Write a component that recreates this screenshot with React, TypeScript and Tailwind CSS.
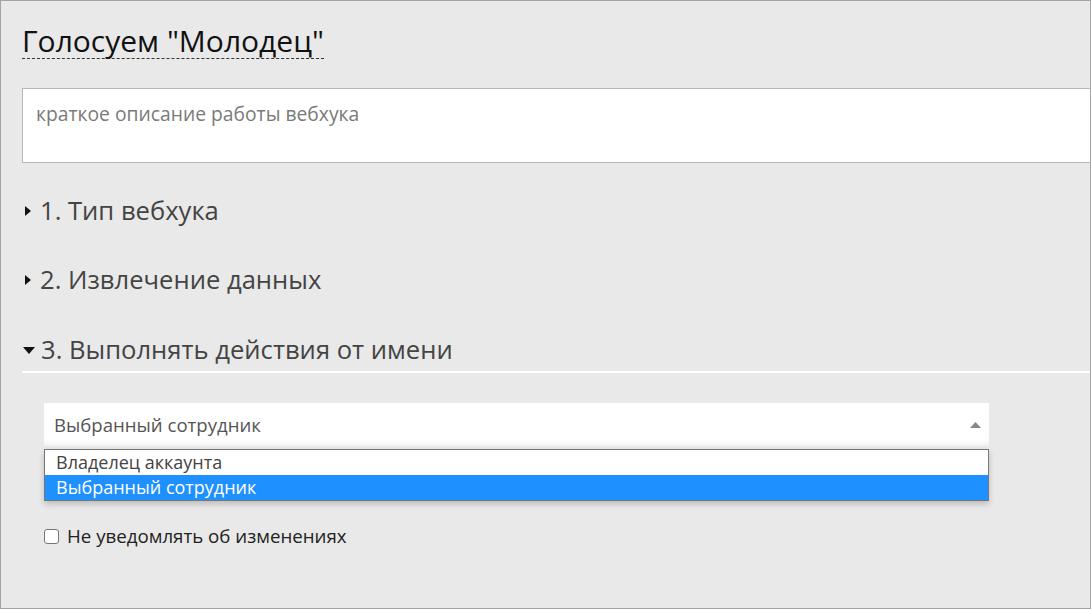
import React from "react";

export default function App() {
  return (
    <div
      className="w-[1091px] h-[609px] border border-[#a3a3a3] bg-[#e9e9e9] overflow-hidden relative"
      style={{ fontFamily: '"Open Sans", "Noto Sans", sans-serif' }}
    >
      <div className="pl-[21px] pt-[22px]">
        <div className="h-[40px] flex items-start">
          <span className="text-[30px] leading-[35px] text-[#111] border-b border-dashed border-[#333]">
            Голосуем "Молодец"
          </span>
        </div>
        <div className="mt-[25px] h-[75px] bg-white border border-[#b8b8b8] border-r-0 pl-[13px] pt-[11px] text-[19.3px] text-[#7a7a7a]">
          краткое описание работы вебхука
        </div>

        <div className="mt-[31px] flex flex-col">
          <div className="h-[34px] flex items-center gap-[9px] text-[25.6px] text-[#444]">
            <svg width="6" height="10" viewBox="0 0 6 10" className="ml-[3px]">
              <path d="M0 0 L6 5 L0 10 Z" fill="#111" />
            </svg>
            <span>1. Тип вебхука</span>
          </div>
          <div className="mt-[35px] h-[34px] flex items-center gap-[9px] text-[25.6px] text-[#444]">
            <svg width="6" height="10" viewBox="0 0 6 10" className="ml-[3px]">
              <path d="M0 0 L6 5 L0 10 Z" fill="#111" />
            </svg>
            <span>2. Извлечение данных</span>
          </div>
          <div className="mt-[36px] h-[34px] flex items-center gap-[6px] text-[25.6px] text-[#444]">
            <svg width="12" height="7" viewBox="0 0 12 7" className="ml-[1px]">
              <path d="M0 0 L12 0 L6 7 Z" fill="#111" />
            </svg>
            <span>3. Выполнять действия от имени</span>
          </div>
          <div className="mt-[4px] h-[2px] bg-white" />
        </div>

        <div className="pl-[22px] pr-[101px] mt-[30px]">
          <div className="relative">
            <div className="h-[43px] bg-white flex items-center justify-between pl-[10px] pr-[8px] text-[18.6px] text-[#555] shadow-[inset_0_-6px_6px_-4px_rgba(0,0,0,0.08)]">
              <span>Выбранный сотрудник</span>
              <svg width="11" height="6" viewBox="0 0 11 6">
                <path d="M0 6 L5.5 0 L11 6 Z" fill="#888" />
              </svg>
            </div>
            <div className="mt-[3px] border border-[#767676] bg-white shadow-[0_3px_6px_rgba(0,0,0,0.2)] text-[18px]">
              <div className="h-[25px] flex items-center pl-[11px] text-[#444]">Владелец аккаунта</div>
              <div className="h-[25px] flex items-center pl-[11px] text-white bg-[#1e90ff]">Выбранный сотрудник</div>
            </div>
          </div>
          <label className="mt-[21px] flex items-center gap-[8px] text-[18.7px] text-[#222]">
            <span className="w-[15px] h-[15px] rounded-[3px] border border-[#767676] bg-white inline-block" />
            <span>Не уведомлять об изменениях</span>
          </label>
        </div>
      </div>
    </div>
  );
}
